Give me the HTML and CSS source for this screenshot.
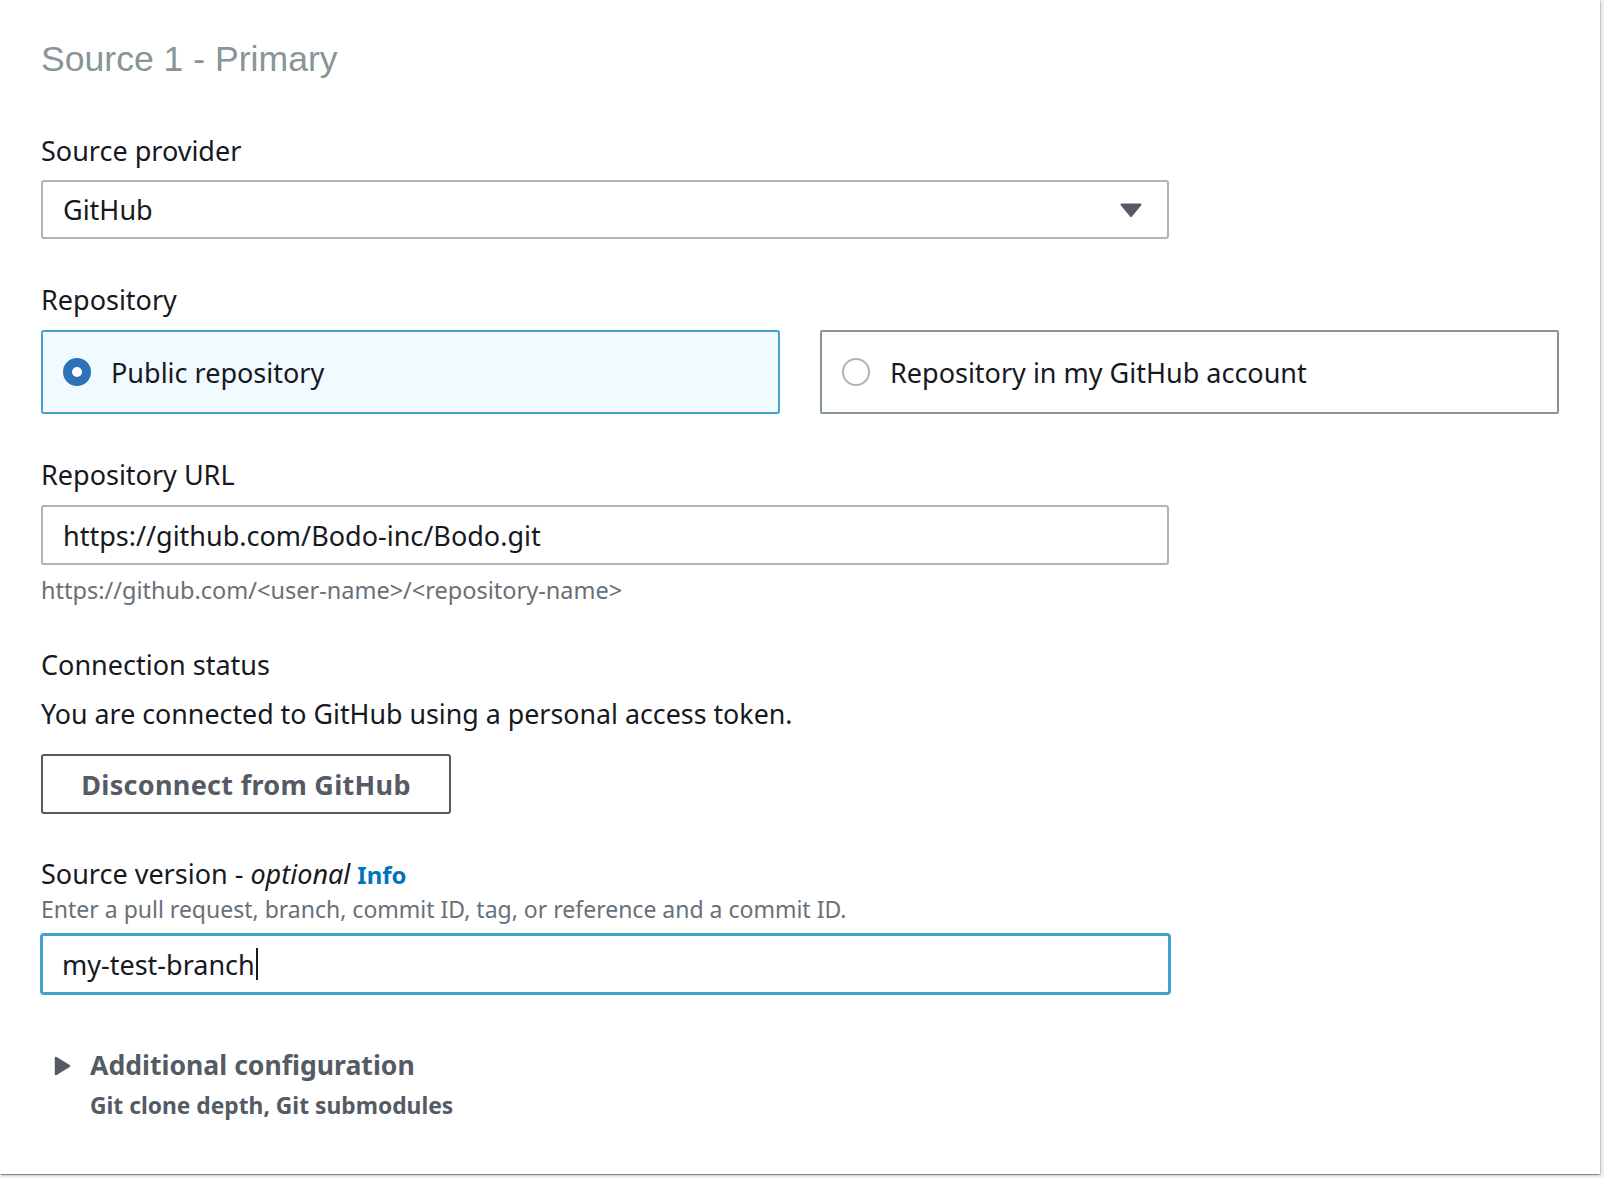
FILE: index.html
```html
<!DOCTYPE html>
<html lang="en">
<head>
<meta charset="utf-8">
<title>Source 1 - Primary</title>
<link rel="stylesheet" href="styles.css">
</head>
<body>
<div class="card">
  <h2 class="title">Source 1 - Primary</h2>

  <div class="field field-first">
    <div class="label">Source provider</div>
    <div class="select">
      <span class="select-value">GitHub</span>
      <svg class="caret-down" width="22" height="14" viewBox="0 0 22 14"><path d="M1.5 1.5 H20.5 L11 13 Z" fill="#545b64" stroke="#545b64" stroke-width="2" stroke-linejoin="round"/></svg>
    </div>
  </div>

  <div class="field">
    <div class="label">Repository</div>
    <div class="tiles">
      <div class="tile tile-selected">
        <span class="radio radio-on"></span>
        <span class="tile-text">Public repository</span>
      </div>
      <div class="tile">
        <span class="radio"></span>
        <span class="tile-text">Repository in my GitHub account</span>
      </div>
    </div>
  </div>

  <div class="field">
    <div class="label">Repository URL</div>
    <div class="input">https://github.com/Bodo-inc/Bodo.git</div>
    <div class="hint hint-below">https://github.com/&lt;user-name&gt;/&lt;repository-name&gt;</div>
  </div>

  <div class="field field-status">
    <div class="label">Connection status</div>
    <p class="sentence">You are connected to GitHub using a personal access token.</p>
    <button class="btn">Disconnect from GitHub</button>
  </div>

  <div class="field field-version">
    <div class="label">Source version - <i>optional</i> <a class="info">Info</a></div>
    <div class="hint hint-desc">Enter a pull request, branch, commit ID, tag, or reference and a commit ID.</div>
    <div class="input input-focus"><span>my-test-branch</span><span class="cursor"></span></div>
  </div>

  <div class="expander">
    <svg class="caret-right" width="18" height="20" viewBox="0 0 18 20"><path d="M2 2 L15 10 L2 18 Z" fill="#545b64" stroke="#545b64" stroke-width="2.5" stroke-linejoin="round"/></svg>
    <div class="expander-text">
      <div class="expander-title">Additional configuration</div>
      <div class="expander-sub">Git clone depth, Git submodules</div>
    </div>
  </div>
</div>
</body>
</html>
```
FILE: styles.css
```css
html, body {
  margin: 0;
  padding: 0;
}
body {
  background: #eef0f0;
  width: 1604px;
  height: 1178px;
  overflow: hidden;
  font-family: "Noto Sans", "Open Sans", sans-serif;
  color: #16191f;
}
.card {
  box-sizing: border-box;
  width: 1600px;
  height: 1174px;
  background: #fff;
  padding: 39px 41px 0 41px;
  box-shadow: 0 2px 1px -1px rgba(0, 28, 36, 0.35), 1px 1px 1px 0 rgba(0, 28, 36, 0.2);
}
.title {
  margin: 0;
  font-family: "Liberation Sans", Arial, sans-serif;
  font-weight: 400;
  font-size: 35.6px;
  line-height: 40px;
  color: #879596;
}
.field {
  margin-top: 43px;
}
.field-first {
  margin-top: 54px;
}
.field-status {
  margin-top: 41px;
}
.field-version {
  margin-top: 42px;
}
.label {
  font-size: 27px;
  line-height: 36px;
  color: #16191f;
}
.label i {
  font-style: italic;
}
.info {
  font-weight: 700;
  font-size: 24px;
  color: #0073bb;
}
.select {
  box-sizing: border-box;
  margin-top: 11px;
  width: 1128px;
  height: 59px;
  border: 2px solid #aab7b8;
  border-radius: 3px;
  display: flex;
  align-items: center;
  justify-content: space-between;
  padding: 0 25px 0 20px;
  font-size: 27px;
}
.caret-down {
  display: block;
}
.tiles {
  margin-top: 12px;
  display: grid;
  grid-template-columns: 1fr 1fr;
  gap: 40px;
}
.tile {
  box-sizing: border-box;
  height: 84px;
  border: 2px solid #879596;
  border-radius: 2px;
  display: flex;
  align-items: center;
  padding-left: 20px;
  gap: 20px;
  font-size: 27px;
}
.tile-selected {
  border-color: #44a1cc;
  background: #f1faff;
  border-radius: 3px;
}
.radio {
  box-sizing: border-box;
  width: 28px;
  height: 28px;
  border-radius: 50%;
  border: 2px solid #aab7b8;
  background: #fff;
  flex: none;
}
.radio-on {
  border: 9px solid #2e73b8;
  background: #fff;
}
.input {
  box-sizing: border-box;
  margin-top: 12px;
  width: 1128px;
  height: 60px;
  border: 2px solid #aab7b8;
  border-radius: 3px;
  display: flex;
  align-items: center;
  padding-left: 20px;
  font-size: 27px;
}
.hint {
  font-size: 23.5px;
  line-height: 32px;
  color: #687078;
}
.hint-desc {
  font-size: 23px;
}
.hint-below {
  margin-top: 9px;
}
.sentence {
  margin: 13px 0 0 0;
  font-size: 26.8px;
  line-height: 36px;
}
.btn {
  box-sizing: border-box;
  margin-top: 22px;
  width: 410px;
  height: 60px;
  border: 2px solid #545b64;
  border-radius: 3px;
  background: #fff;
  font-family: "Noto Sans", "Open Sans", sans-serif;
  font-weight: 700;
  font-size: 27px;
  color: #545b64;
  padding: 0;
  letter-spacing: 0.3px;
}
.input-focus {
  margin-top: 8px;
  margin-left: -1px;
  width: 1131px;
  height: 62px;
  border: 3px solid #44a1cc;
  border-radius: 4px;
  padding-left: 19px;
}
.cursor {
  display: inline-block;
  width: 2px;
  height: 32px;
  background: #16191f;
  margin-left: 1px;
}
.expander {
  margin-top: 52px;
  display: flex;
  align-items: flex-start;
  padding-left: 13px;
  gap: 18px;
}
.caret-right {
  margin-top: 9px;
  flex: none;
}
.expander-title {
  font-weight: 700;
  font-size: 26.6px;
  line-height: 36px;
  color: #545b64;
}
.expander-sub {
  margin-top: 7px;
  font-weight: 700;
  font-size: 22.8px;
  line-height: 32px;
  color: #545b64;
}
```
